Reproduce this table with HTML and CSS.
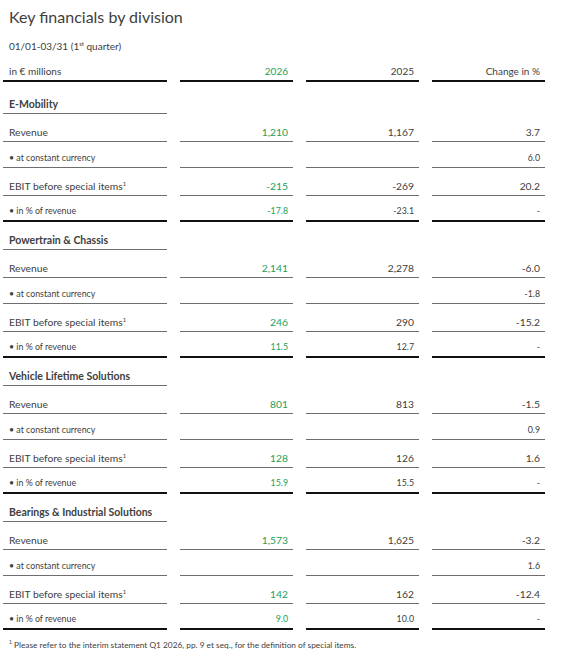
FILE: index.html
```html
<!DOCTYPE html>
<html lang="en">
<head>
     <meta charset="UTF-8">
     <title>Key financials by division</title>
     <link rel="stylesheet" href="styles.css">
</head>
<body>
     <h1 class="title">Key financials by division</h1>
     <p class="period">01/01-03/31 (1<sup>st</sup> quarter)</p>

     <div class="row head-row">
          <div class="cell label">in € millions</div>
          <div class="cell num green">2026</div>
          <div class="cell num">2025</div>
          <div class="cell num">Change in %</div>
     </div>

     <div class="section first">
          <div class="row group"><div class="cell label">E-Mobility</div></div>
          <div class="row big"><div class="cell label">Revenue</div><div class="cell num green">1,210</div><div class="cell num">1,167</div><div class="cell num">3.7</div></div>
          <div class="row sub"><div class="cell label">• at constant currency</div><div class="cell num green"></div><div class="cell num"></div><div class="cell num">6.0</div></div>
          <div class="row big"><div class="cell label">EBIT before special items<sup>1</sup></div><div class="cell num green">-215</div><div class="cell num">-269</div><div class="cell num">20.2</div></div>
          <div class="row sub last"><div class="cell label">• in % of revenue</div><div class="cell num green">-17.8</div><div class="cell num">-23.1</div><div class="cell num">-</div></div>
     </div>

     <div class="section">
          <div class="row group"><div class="cell label">Powertrain &amp; Chassis</div></div>
          <div class="row big"><div class="cell label">Revenue</div><div class="cell num green">2,141</div><div class="cell num">2,278</div><div class="cell num">-6.0</div></div>
          <div class="row sub"><div class="cell label">• at constant currency</div><div class="cell num green"></div><div class="cell num"></div><div class="cell num">-1.8</div></div>
          <div class="row big"><div class="cell label">EBIT before special items<sup>1</sup></div><div class="cell num green">246</div><div class="cell num">290</div><div class="cell num">-15.2</div></div>
          <div class="row sub last"><div class="cell label">• in % of revenue</div><div class="cell num green">11.5</div><div class="cell num">12.7</div><div class="cell num">-</div></div>
     </div>

     <div class="section">
          <div class="row group"><div class="cell label">Vehicle Lifetime Solutions</div></div>
          <div class="row big"><div class="cell label">Revenue</div><div class="cell num green">801</div><div class="cell num">813</div><div class="cell num">-1.5</div></div>
          <div class="row sub"><div class="cell label">• at constant currency</div><div class="cell num green"></div><div class="cell num"></div><div class="cell num">0.9</div></div>
          <div class="row big"><div class="cell label">EBIT before special items<sup>1</sup></div><div class="cell num green">128</div><div class="cell num">126</div><div class="cell num">1.6</div></div>
          <div class="row sub last"><div class="cell label">• in % of revenue</div><div class="cell num green">15.9</div><div class="cell num">15.5</div><div class="cell num">-</div></div>
     </div>

     <div class="section">
          <div class="row group"><div class="cell label">Bearings &amp; Industrial Solutions</div></div>
          <div class="row big"><div class="cell label">Revenue</div><div class="cell num green">1,573</div><div class="cell num">1,625</div><div class="cell num">-3.2</div></div>
          <div class="row sub"><div class="cell label">• at constant currency</div><div class="cell num green"></div><div class="cell num"></div><div class="cell num">1.6</div></div>
          <div class="row big"><div class="cell label">EBIT before special items<sup>1</sup></div><div class="cell num green">142</div><div class="cell num">162</div><div class="cell num">-12.4</div></div>
          <div class="row sub last"><div class="cell label">• in % of revenue</div><div class="cell num green">9.0</div><div class="cell num">10.0</div><div class="cell num">-</div></div>
     </div>

     <p class="note"><sup>1</sup> Please refer to the interim statement Q1 2026, pp. 9 et seq., for the definition of special items.</p>
</body>
</html>
```

FILE: styles.css
```css
*{
     padding:0;
     margin:0;
     box-sizing: border-box;
}
html,body{
     width:100%;
     height:100%;
     background:#fff;
}
body{
     font-family: Lato, 'Open Sans', sans-serif;
     color:#404040;
     padding:0 0 0 3px;
}
.title{
     font-size:16px;
     font-weight:400;
     padding:7px 0 0 6px;
     height:40px;
}
.period{
     font-size:10px;
     padding-left:6px;
     height:22px;
}
.period sup{font-size:6px;}

/* table rows */
.row{
     display:grid;
     grid-template-columns: 164px 113px 113px 113px;
     column-gap:13px;
     height:28px;
}
.cell{
     display:flex;
     align-items:flex-end;
     padding-bottom:3px;
     border-bottom:1px solid #6e6e6e;
     font-size:10.3px;
     white-space:nowrap;
}
.label{padding-left:6px;}
.num{
     justify-content:flex-end;
     padding-right:5px;
}
.green{color:#22a05a;}
.cell sup{
     font-size:6px;
     align-self:flex-start;
     margin-top:12px;
}

.head-row{height:20px;}
.head-row .cell{border-bottom:2px solid #111; font-size:10px;}

.group{height:28px;}
.group .cell{font-weight:700; font-size:10.5px;}
.section.first .group{height:32px;}

.sub{height:26px;}
.sub .cell{font-size:8.8px; padding-bottom:4px;}
.sub.last .cell{border-bottom:2px solid #111;}

.note{
     font-size:8.3px;
     padding:9px 0 0 6px;
}
.note sup{font-size:5px;}
```
